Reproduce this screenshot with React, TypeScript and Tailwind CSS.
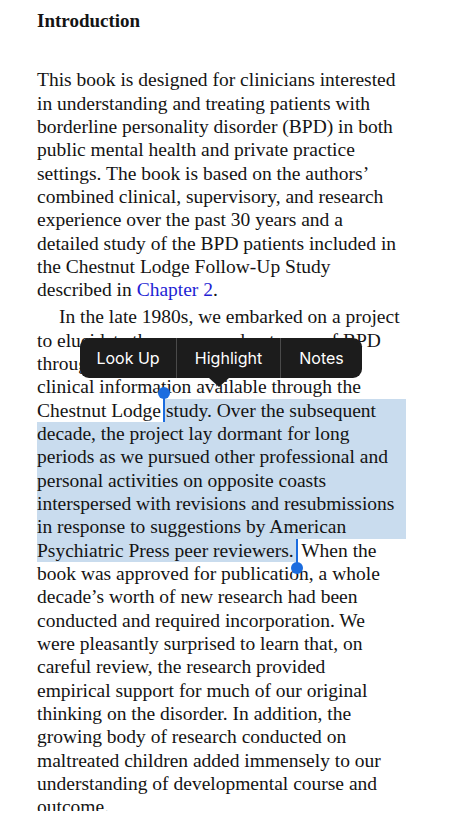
import React from 'react';

const serif = {fontFamily: '"Liberation Serif", "DejaVu Serif", serif'};

const para1 = [
  'This book is designed for clinicians interested',
  'in understanding and treating patients with',
  'borderline personality disorder (BPD) in both',
  'public mental health and private practice',
  'settings. The book is based on the authors’',
  'combined clinical, supervisory, and research',
  'experience over the past 30 years and a',
  'detailed study of the BPD patients included in',
  'the Chestnut Lodge Follow-Up Study',
];

const selected = [
  'decade, the project lay dormant for long',
  'periods as we pursued other professional and',
  'personal activities on opposite coasts',
  'interspersed with revisions and resubmissions',
  'in response to suggestions by American',
];

const after = [
  'book was approved for publication, a whole',
  'decade’s worth of new research had been',
  'conducted and required incorporation. We',
  'were pleasantly surprised to learn that, on',
  'careful review, the research provided',
  'empirical support for much of our original',
  'thinking on the disorder. In addition, the',
  'growing body of research conducted on',
  'maltreated children added immensely to our',
  'understanding of developmental course and',
  'outcome.',
];

function Line({children, className = ''}: {children: React.ReactNode; className?: string}) {
  return (
    <div className={`h-[23.33px] leading-[23.33px] whitespace-nowrap ${className}`}>
      {children}
    </div>
  );
}

export default function App() {
  return (
    <div className="relative h-[811px] w-[460px] overflow-hidden bg-white text-[#141414]" style={serif}>
      <div className="px-[37px] pt-[9px] text-[19.5px]">
        {/* Heading */}
        <div className="h-[23.33px] leading-[23.33px] text-[19px] font-bold mb-[36px]">Introduction</div>

        {/* First paragraph */}
        {para1.map((l) => (
          <Line key={l}>{l}</Line>
        ))}
        <Line>
          described in <span className="text-[#1f1fd4]">Chapter 2</span>.
        </Line>

        {/* Second paragraph */}
        <div className="mt-[3.67px]">
          <Line className="pl-[22px]">In the late 1980s, we embarked on a project</Line>
          <Line>to elucidate the course and outcome of BPD</Line>
          <Line>through a follow-up of the rich</Line>
          <Line>clinical information available through the</Line>
          <div className="flex w-[369px] h-[23.33px] leading-[23.33px] whitespace-nowrap">
            <span className="pr-[3px]">Chestnut Lodge</span>
            <span className="relative flex-1 bg-[#c9dcee] pl-[2px]">
              study. Over the subsequent
              {/* start handle */}
              <span className="absolute -left-px -top-[6px] h-[29px] w-[2px] bg-[#1b6cdf]" />
              <span className="absolute -left-[6px] -top-[12px] h-[12px] w-[12px] rounded-full bg-[#1b6cdf]" />
            </span>
          </div>
          {selected.map((l) => (
            <Line key={l} className="w-[369px] bg-[#c9dcee]">
              {l}
            </Line>
          ))}
          <Line>
            <span className="relative inline-block bg-[#c9dcee] pr-[3px]">
              Psychiatric Press peer reviewers.
              {/* end handle */}
              <span className="absolute -right-px top-0 h-[26px] w-[2px] bg-[#1b6cdf]" />
              <span className="absolute -right-[6px] top-[23px] h-[12px] w-[12px] rounded-full bg-[#1b6cdf]" />
            </span>
            {' '}When the
          </Line>
          {after.map((l) => (
            <Line key={l}>{l}</Line>
          ))}
        </div>
      </div>

      {/* Edit menu */}
      <div
        className="absolute left-[80px] top-[338px] w-[282px]"
        style={{fontFamily: 'Inter, "Liberation Sans", sans-serif'}}
      >
        <div className="flex h-[40px] rounded-[9px] bg-[#1c1c1c] text-white text-[16px]">
          <div className="flex w-[97px] items-center justify-center border-r border-[#4a4a4a]">Look Up</div>
          <div className="flex w-[104px] items-center justify-center border-r border-[#4a4a4a]">Highlight</div>
          <div className="flex flex-1 items-center justify-center">Notes</div>
        </div>
        <div className="ml-[129px] h-0 w-0 border-x-[10px] border-t-[9px] border-x-transparent border-t-[#1c1c1c]" />
      </div>
    </div>
  );
}
